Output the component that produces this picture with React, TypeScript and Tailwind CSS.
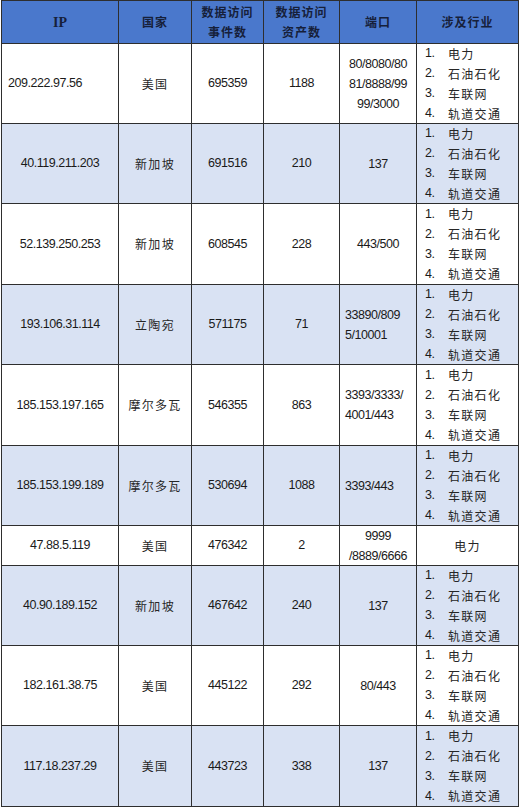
import React from "react";

type Row = {
  ip: string;
  ipLeft?: boolean;
  country: string;
  events: string;
  assets: string;
  ports: string[];
  portsLeft?: boolean;
  single?: boolean;
};

const rows: Row[] = [
  { ip: "209.222.97.56", ipLeft: true, country: "美国", events: "695359", assets: "1188", ports: ["80/8080/80", "81/8888/99", "99/3000"] },
  { ip: "40.119.211.203", country: "新加坡", events: "691516", assets: "210", ports: ["137"] },
  { ip: "52.139.250.253", country: "新加坡", events: "608545", assets: "228", ports: ["443/500"] },
  { ip: "193.106.31.114", country: "立陶宛", events: "571175", assets: "71", ports: ["33890/809", "5/10001"], portsLeft: true },
  { ip: "185.153.197.165", country: "摩尔多瓦", events: "546355", assets: "863", ports: ["3393/3333/", "4001/443"], portsLeft: true },
  { ip: "185.153.199.189", country: "摩尔多瓦", events: "530694", assets: "1088", ports: ["3393/443"], portsLeft: true },
  { ip: "47.88.5.119", country: "美国", events: "476342", assets: "2", ports: ["9999", "/8889/6666"], single: true },
  { ip: "40.90.189.152", country: "新加坡", events: "467642", assets: "240", ports: ["137"] },
  { ip: "182.161.38.75", country: "美国", events: "445122", assets: "292", ports: ["80/443"] },
  { ip: "117.18.237.29", country: "美国", events: "443723", assets: "338", ports: ["137"] },
];

const industries = ["电力", "石油石化", "车联网", "轨道交通"];

const num = "font-['Liberation_Sans',sans-serif] text-[12.5px] tracking-[-0.45px] text-[#1a1a1a]";
const cjk = "font-['Noto_Sans_CJK_SC',sans-serif] text-[12px] tracking-[1.3px] text-[#262626]";

function Cell({ children, bg, className = "" }: { children?: React.ReactNode; bg: string; className?: string }) {
  return <div className={`${bg} flex items-center min-h-0 ${className}`}>{children}</div>;
}

export default function App() {
  return (
    <div className="w-[520px] h-[809px] bg-white">
      <div className="ml-px w-[518px] grid grid-cols-[116px_72px_71px_75px_76px_101px] grid-rows-[42px_79px_79px_80px_79px_80px_79px_39px_79px_79px_80px] gap-px p-px bg-[#2e2e2e]">
        {/* header */}
        <div className="bg-[#4a78cc] flex items-center justify-center font-['Liberation_Serif',serif] font-bold text-[14px] text-[#16203a]">IP</div>
        {["国家", "数据访问\n事件数", "数据访问\n资产数", "端口", "涉及行业"].map((t, i) => (
          <div
            key={i}
            className="bg-[#4a78cc] flex items-center justify-center text-center whitespace-pre-line font-['Noto_Sans_CJK_SC',sans-serif] font-bold text-[12px] leading-[20px] tracking-[1px] text-[#16203a]"
          >
            {t}
          </div>
        ))}
        {rows.map((r, i) => {
          const bg = i % 2 === 1 ? "bg-[#d9e2f3]" : "bg-white";
          return (
            <React.Fragment key={i}>
              <Cell bg={bg} className={r.ipLeft ? "justify-start pl-[6px]" : "justify-center"}>
                <span className={num}>{r.ip}</span>
              </Cell>
              <Cell bg={bg} className="justify-center">
                <span className={cjk}>{r.country}</span>
              </Cell>
              <Cell bg={bg} className="justify-center">
                <span className={num}>{r.events}</span>
              </Cell>
              <Cell bg={bg} className="justify-center">
                <span className={num}>{r.assets}</span>
              </Cell>
              <Cell bg={bg} className={r.portsLeft ? "justify-start pl-[5px]" : "justify-center"}>
                <div className={`${num} leading-[20px] ${r.portsLeft ? "text-left" : "text-center"}`}>
                  {r.ports.map((p, j) => (
                    <div key={j}>{p}</div>
                  ))}
                </div>
              </Cell>
              <Cell bg={bg} className={r.single ? "justify-center" : "justify-start pl-[8px]"}>
                {r.single ? (
                  <span className={cjk}>电力</span>
                ) : (
                  <div className="flex flex-col">
                    {industries.map((t, j) => (
                      <div key={j} className="flex items-center h-[20px]">
                        <span className={`${num} w-[23px]`}>{j + 1}.</span>
                        <span className={cjk}>{t}</span>
                      </div>
                    ))}
                  </div>
                )}
              </Cell>
            </React.Fragment>
          );
        })}
      </div>
    </div>
  );
}
